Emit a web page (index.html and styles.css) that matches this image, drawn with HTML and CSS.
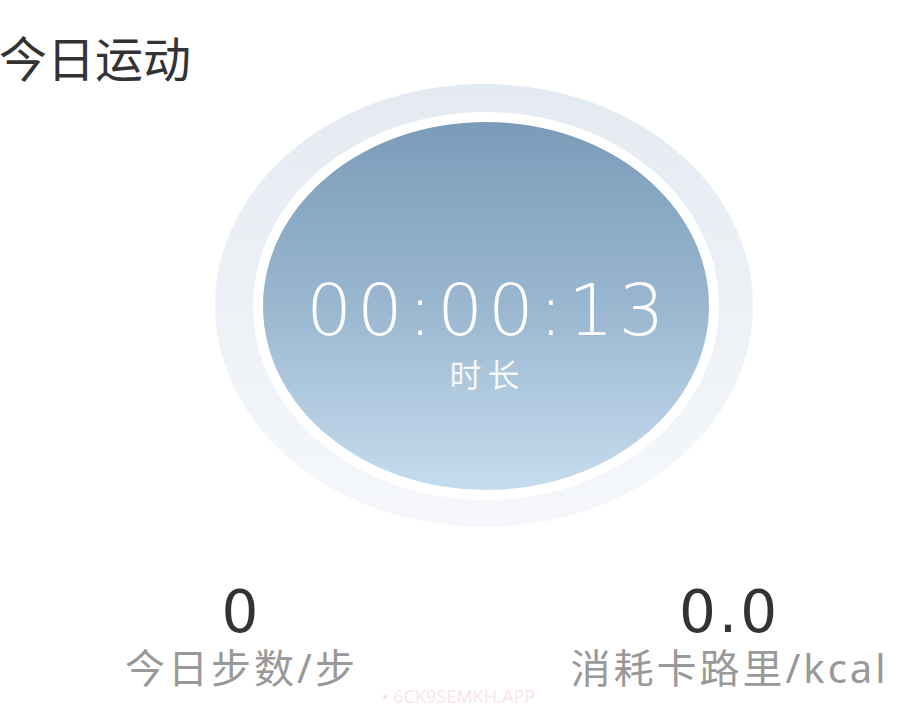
FILE: index.html
```html
<!DOCTYPE html>
<html lang="zh-CN">
<head>
    <meta charset="UTF-8">
    <meta name="viewport" content="width=device-width, initial-scale=1.0">
    <title>今日运动</title>
    <link rel="stylesheet" href="styles.css">
</head>
<body>
    <h1 class="title">今日运动</h1>

    <div class="dial-wrap">
        <div class="dial-outer">
            <div class="dial-inner">
                <div class="timer">00:00:13</div>
                <div class="timer-label">时长</div>
            </div>
        </div>
    </div>

    <div class="stats">
        <div class="stat">
            <div class="stat-value">0</div>
            <div class="stat-label">今日步数/步</div>
        </div>
        <div class="stat">
            <div class="stat-value">0.0</div>
            <div class="stat-label">消耗卡路里/kcal</div>
        </div>
    </div>

    <div class="watermark">• 6CK9SEMKH.APP</div>
</body>
</html>
```

FILE: styles.css
```css
body {
    margin: 0;
    width: 917px;
    height: 720px;
    overflow: hidden;
    background: #fff;
    font-family: "Noto Sans", "Noto Sans CJK SC", sans-serif;
    color: #333;
}

.title {
    margin: 35px 0 0 -1px;
    font-size: 48px;
    line-height: 48px;
    font-weight: 400;
    color: #333;
}

.dial-wrap {
    display: flex;
    justify-content: center;
    padding-left: 50px;
    margin-top: 1px;
}

.dial-outer {
    width: 538px;
    height: 443px;
    border-radius: 50%;
    background: linear-gradient(180deg, #e4eaf1 0%, #eef2f7 55%, #f5f7fb 100%);
    display: flex;
    justify-content: center;
    align-items: center;
}

.dial-inner {
    box-sizing: border-box;
    width: 466px;
    height: 388px;
    margin-left: 4px;
    padding-top: 152px;
    border-radius: 50%;
    border: 10px solid #fff;
    background: linear-gradient(180deg, #7a9bb9 0%, #9ab7d0 50%, #c6dcee 100%);
    display: flex;
    flex-direction: column;
    align-items: center;
    color: #fff;
}

.timer {
    font-family: "DejaVu Sans", sans-serif;
    font-weight: 200;
    font-size: 72px;
    line-height: 72px;
    letter-spacing: 5px;
    padding-left: 5px;
}

.timer-label {
    font-size: 32px;
    line-height: 32px;
    margin-top: 13px;
    letter-spacing: 6px;
    padding-left: 4px;
    color: #f4f8fb;
}

.stats {
    display: grid;
    grid-template-columns: 360px 360px;
    column-gap: 128px;
    padding-left: 60px;
    margin-top: 56px;
}

.stat {
    display: flex;
    flex-direction: column;
    align-items: center;
}

.stat-value {
    font-family: "DejaVu Sans", sans-serif;
    font-weight: 400;
    font-size: 58px;
    line-height: 58px;
    letter-spacing: 3px;
    padding-left: 3px;
    color: #333;
}

.stat-label {
    font-size: 40px;
    line-height: 40px;
    margin-top: 7px;
    letter-spacing: 3px;
    padding-left: 3px;
    color: #999;
}

.watermark {
    margin-top: -4px;
    text-align: center;
    font-size: 18px;
    color: #fbe4f1;
}
```
